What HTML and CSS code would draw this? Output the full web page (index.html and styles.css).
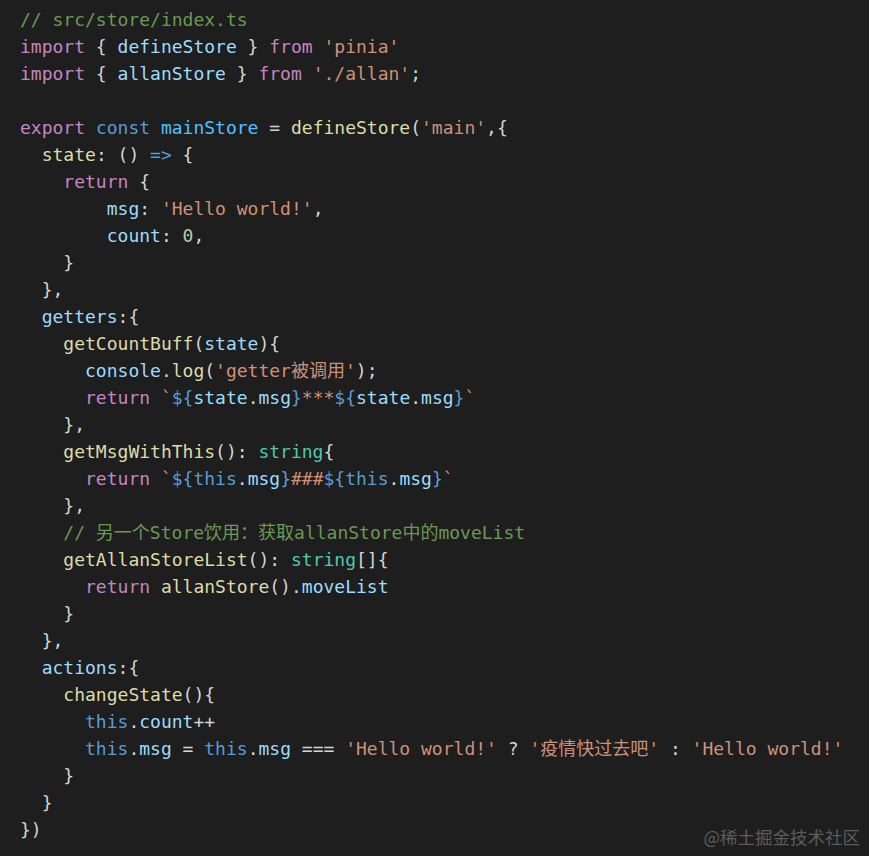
FILE: index.html
```html
<!DOCTYPE html>
<html lang="zh-CN">
<head>
    <meta charset="UTF-8">
    <meta name="viewport" content="width=device-width, initial-scale=1.0">
    <title>src/store/index.ts</title>
    <link rel="stylesheet" href="styles.css">
</head>
<body>
    <div class="shot">
<pre class="code"><span class="cm">// src/store/index.ts</span>
<span class="kw">import</span> { <span class="vr">defineStore</span> } <span class="kw">from</span> <span class="st">'pinia'</span>
<span class="kw">import</span> { <span class="vr">allanStore</span> } <span class="kw">from</span> <span class="st">'./allan'</span>;

<span class="kw">export</span> <span class="sg">const</span> <span class="cn">mainStore</span> = <span class="fn">defineStore</span>(<span class="st">'main'</span>,{
  <span class="fn">state</span>: () <span class="sg">=&gt;</span> {
    <span class="kw">return</span> {
        <span class="vr">msg</span>: <span class="st">'Hello world!'</span>,
        <span class="vr">count</span>: <span class="nm">0</span>,
    }
  },
  <span class="vr">getters</span>:{
    <span class="fn">getCountBuff</span>(<span class="vr">state</span>){
      <span class="vr">console</span>.<span class="fn">log</span>(<span class="st">'getter被调用'</span>);
      <span class="kw">return</span> <span class="st">`</span><span class="sg">${</span><span class="vr">state</span>.<span class="vr">msg</span><span class="sg">}</span><span class="st">***</span><span class="sg">${</span><span class="vr">state</span>.<span class="vr">msg</span><span class="sg">}</span><span class="st">`</span>
    },
    <span class="fn">getMsgWithThis</span>(): <span class="tp">string</span>{
      <span class="kw">return</span> <span class="st">`</span><span class="sg">${this</span>.<span class="vr">msg</span><span class="sg">}</span><span class="st">###</span><span class="sg">${this</span>.<span class="vr">msg</span><span class="sg">}</span><span class="st">`</span>
    },
    <span class="cm">// 另一个Store饮用：获取allanStore中的moveList</span>
    <span class="fn">getAllanStoreList</span>(): <span class="tp">string</span>[]{
      <span class="kw">return</span> <span class="fn">allanStore</span>().<span class="vr">moveList</span>
    }
  },
  <span class="vr">actions</span>:{
    <span class="fn">changeState</span>(){
      <span class="sg">this</span>.<span class="vr">count</span>++
      <span class="sg">this</span>.<span class="vr">msg</span> = <span class="sg">this</span>.<span class="vr">msg</span> === <span class="st">'Hello world!'</span> ? <span class="st">'疫情快过去吧'</span> : <span class="st">'Hello world!'</span>
    }
  }
})</pre>
        <div class="mark">@稀土掘金技术社区</div>
    </div>
</body>
</html>
```

FILE: styles.css
```css
html, body {
    margin: 0;
    padding: 0;
    background-color: #1e1e1e;
}
.shot {
    position: relative;
    width: 869px;
    height: 856px;
    overflow: hidden;
    background-color: #1e1e1e;
}
.code {
    margin: 0;
    padding: 6px 0 0 20px;
    font-family: "DejaVu Sans Mono", "Noto Sans CJK SC", monospace;
    font-size: 18px;
    line-height: 27px;
    color: #d4d4d4;
    white-space: pre;
}
.cm { color: #6a9955; }
.kw { color: #c586c0; }
.sg { color: #569cd6; }
.vr { color: #9cdcfe; }
.cn { color: #4fc1ff; }
.fn { color: #dcdcaa; }
.st { color: #ce9178; }
.nm { color: #b5cea8; }
.tp { color: #4ec9b0; }
.mark {
    position: absolute;
    right: 9px;
    bottom: 7px;
    font-family: "Noto Sans CJK SC", sans-serif;
    font-size: 17.5px;
    color: #5c5c5c;
}
```
